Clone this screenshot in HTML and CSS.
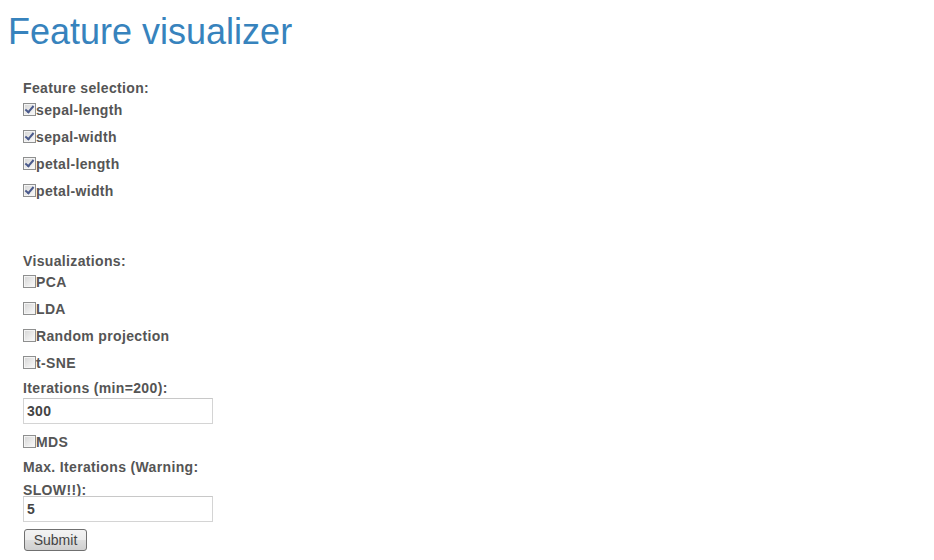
FILE: index.html
```html
<!DOCTYPE html>
<html>
<head>
<meta charset="utf-8">
<title>Feature visualizer</title>
<link rel="stylesheet" href="styles.css">
</head>
<body>
<h1 class="title">Feature visualizer</h1>
<form class="form">
  <div class="group">
    <div class="label">Feature selection:</div>
    <label class="check"><input type="checkbox" checked>sepal-length</label>
    <label class="check"><input type="checkbox" checked>sepal-width</label>
    <label class="check"><input type="checkbox" checked>petal-length</label>
    <label class="check"><input type="checkbox" checked>petal-width</label>
  </div>
  <div class="group group-vis">
    <div class="label">Visualizations:</div>
    <label class="check check-first"><input type="checkbox">PCA</label>
    <label class="check"><input type="checkbox">LDA</label>
    <label class="check"><input type="checkbox">Random projection</label>
    <label class="check check-tight"><input type="checkbox">t-SNE</label>
    <div class="label">Iterations (min=200):</div>
    <input class="text text-iter" type="text" value="300">
    <label class="check check-tight"><input type="checkbox">MDS</label>
    <div class="label label-wrap">Max. Iterations (Warning: SLOW!!):</div>
    <input class="text text-max" type="text" value="5">
    <button class="submit" type="button">Submit</button>
  </div>
</form>
</body>
</html>
```
FILE: styles.css
```css
body {
  margin: 8px;
  font-family: "Liberation Sans", Arial, sans-serif;
  background: #fff;
}
.title {
  margin: 4px 0 0 0;
  font-size: 36px;
  line-height: 40px;
  font-weight: normal;
  color: #3783bd;
}
.form {
  width: 190px;
  padding: 25px 0 0 15px;
  display: flex;
  flex-direction: column;
}
.group {
  display: flex;
  flex-direction: column;
  align-items: flex-start;
}
.group-vis {
  margin-top: 43px;
}
.label, .check {
  font-size: 14px;
  font-weight: bold;
  color: #555;
  letter-spacing: 0.35px;
}
.label {
  line-height: 22px;
}
.label-wrap {
  line-height: 23px;
}
.check {
  display: flex;
  align-items: center;
  line-height: 22px;
  margin-bottom: 5px;
}
.check-first {
  margin-top: -1px;
}
.check-tight {
  margin-bottom: 3px;
}
.check input {
  appearance: none;
  -webkit-appearance: none;
  width: 13px;
  height: 13px;
  margin: 0;
  border: 1px solid #8e8f8f;
  background: linear-gradient(135deg, #d4d4d4 0%, #f0f0f0 70%, #fbfbfb 100%);
  box-shadow: inset 0 0 0 1px #f4f4f4;
  position: relative;
  top: -1px;
}
.check input:checked::after {
  content: "";
  position: absolute;
  left: 3px;
  top: 0px;
  width: 3px;
  height: 7px;
  border: solid #4a5a8c;
  border-width: 0 2px 2px 0;
  transform: rotate(40deg);
}
.text {
  box-sizing: border-box;
  width: 190px;
  height: 26px;
  padding: 0 3px;
  border: 1px solid #d4d4d4;
  border-top-color: #c8c8c8;
  font-family: "Liberation Sans", Arial, sans-serif;
  font-size: 14px;
  font-weight: bold;
  color: #444;
  letter-spacing: 0.3px;
  outline: none;
}
.text-iter {
  margin: -1px 0 7px 0;
}
.text-max {
  margin: -6px 0 0 0;
}
.submit {
  margin: 7px 0 0 1px;
  width: 63px;
  height: 22px;
  padding: 0;
  border: 1px solid #707070;
  border-radius: 3px;
  background: linear-gradient(#f3f3f3 0%, #ebebeb 50%, #dddddd 51%, #cfcfcf 100%);
  font-family: "Liberation Sans", Arial, sans-serif;
  font-size: 14px;
  color: #444;
}
```
